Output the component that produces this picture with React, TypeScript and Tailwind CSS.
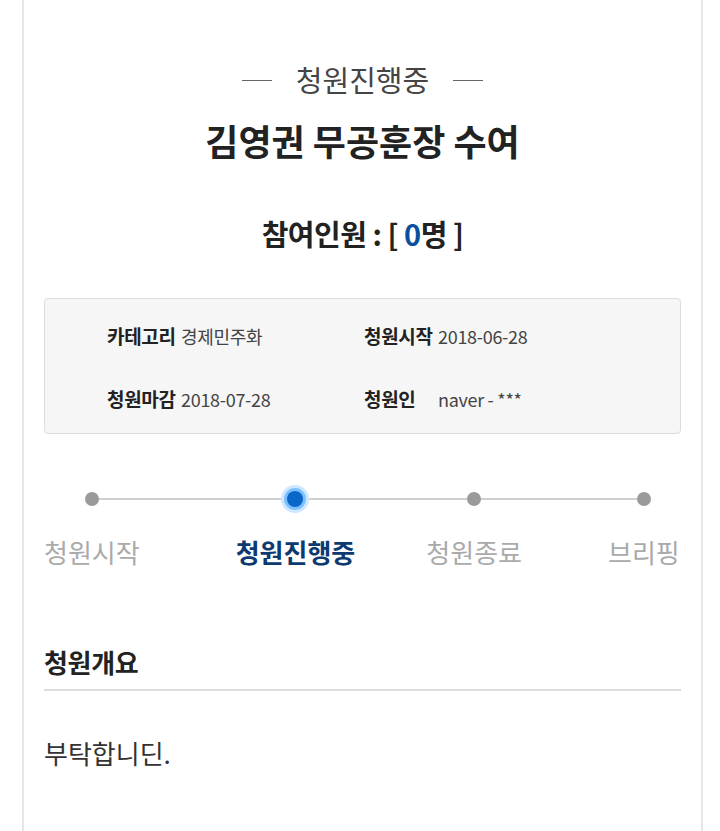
import React from "react"

const font = { fontFamily: '"Noto Sans CJK KR", "Noto Sans", sans-serif' }

interface InfoItemProps {
    label: string
    value: string
}

const InfoItem: React.FC<InfoItemProps> = ({ label, value }) => (
    <div className="flex items-center h-[28px]">
        <span className="w-[74px] shrink-0 text-[19px] font-bold text-[#222] tracking-[-0.3px]">{label}</span>
        <span className="text-[18px] text-[#444] tracking-[-0.3px]">{value}</span>
    </div>
)

const steps = [
    { label: "청원시작", active: false, ml: "ml-0" },
    { label: "청원진행중", active: true, ml: "ml-[96px]" },
    { label: "청원종료", active: false, ml: "ml-[71px]" },
    { label: "브리핑", active: false, ml: "ml-[86px]" },
]

const Dot = ({ active }: { active: boolean }) =>
    active ? (
        <svg width="30" height="30" viewBox="0 0 30 30">
            <circle cx="15" cy="15" r="14" fill="#cfe7ff" />
            <circle cx="15" cy="15" r="11" fill="#7cc0ff" />
            <circle cx="15" cy="15" r="8" fill="#0a66c8" />
        </svg>
    ) : (
        <svg width="30" height="30" viewBox="0 0 30 30">
            <circle cx="15" cy="15" r="7" fill="#9a9a9a" />
        </svg>
    )

const App: React.FC = () => {
    return (
        <div className="w-[720px] h-[831px] bg-white overflow-hidden" style={font}>
            <div className="ml-[22px] w-[681px] h-full border-x-2 border-[#e6e6e6] px-[20px] pt-[62px]">
                {/* status header */}
                <div className="flex items-center justify-center h-[36px] text-[29px] text-[#444]">
                    <span className="w-[30px] h-px bg-[#666]"></span>
                    <span className="mx-[24px]">청원진행중</span>
                    <span className="w-[30px] h-px bg-[#666]"></span>
                </div>
                <h1 className="mt-[20px] h-[44px] leading-[44px] text-center text-[36px] font-bold text-[#222]">
                    김영권 무공훈장 수여
                </h1>
                <div className="mt-[51px] h-[40px] leading-[40px] text-center text-[29px] font-bold text-[#222] tracking-[-0.5px]">
                    참여인원 : [ <span className="text-[#0b4f9e]">0</span>명 ]
                </div>

                {/* info box */}
                <div className="mt-[45px] h-[136px] bg-[#f6f6f6] border border-[#dcdcdc] rounded-[4px] pl-[62px] pt-[23px]">
                    <div className="grid grid-cols-[257px_1fr] gap-y-[35px]">
                        <InfoItem label="카테고리" value="경제민주화" />
                        <InfoItem label="청원시작" value="2018-06-28" />
                        <InfoItem label="청원마감" value="2018-07-28" />
                        <InfoItem label="청원인" value="naver - ***" />
                    </div>
                </div>

                {/* progress steps */}
                <div className="relative mt-[50px] flex">
                    <div className="absolute left-[48px] w-[553px] top-[14px] h-[2px] bg-[#cfcfcf]"></div>
                    {steps.map(s => (
                        <div key={s.label} className={`relative flex flex-col items-center shrink-0 ${s.ml}`}>
                            <Dot active={s.active} />
                            <span
                                className={`mt-[21px] h-[34px] leading-[34px] text-[26px] whitespace-nowrap ${
                                    s.active ? "font-bold text-[#0d3a70]" : "text-[#aaa]"
                                }`}
                            >
                                {s.label}
                            </span>
                        </div>
                    ))}
                </div>

                {/* summary */}
                <div className="mt-[76px] h-[34px] leading-[34px] text-[26px] font-bold text-[#222] tracking-[-0.3px]">청원개요</div>
                <div className="mt-[10px] h-[2px] bg-[#dcdcdc]"></div>
                <p className="mt-[45px] h-[34px] leading-[34px] text-[26px] text-[#333]">부탁합니딘.</p>
            </div>
        </div>
    )
}

export default App
